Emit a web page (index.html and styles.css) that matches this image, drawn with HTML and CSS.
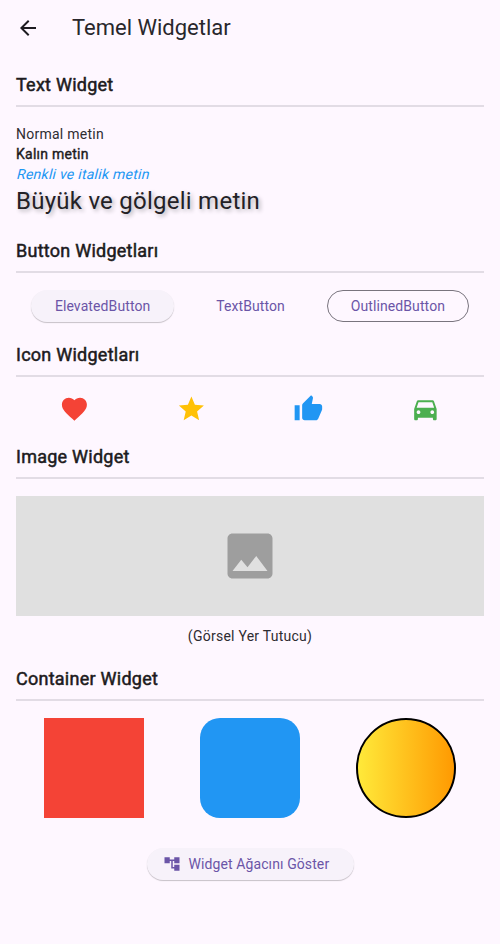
FILE: index.html
```html
<!DOCTYPE html>
<html lang="tr">
<head>
<meta charset="utf-8">
<title>Temel Widgetlar</title>
<link rel="stylesheet" href="styles.css">
</head>
<body>
<header class="app-bar">
  <svg class="back" viewBox="0 0 24 24"><path d="M20 11H7.83l5.59-5.59L12 4l-8 8 8 8 1.41-1.41L7.83 13H20v-2z"/></svg>
  <h1>Temel Widgetlar</h1>
</header>
<main>
  <section class="text-section">
    <h2>Text Widget</h2>
    <p>Normal metin</p>
    <p class="bold">Kalın metin</p>
    <p class="accent">Renkli ve italik metin</p>
    <p class="large">Büyük ve gölgeli metin</p>
  </section>
  <section class="button-section">
    <h2>Button Widgetları</h2>
    <div class="row buttons">
      <button class="elevated">ElevatedButton</button>
      <button class="text">TextButton</button>
      <button class="outlined">OutlinedButton</button>
    </div>
  </section>
  <section class="icon-section">
    <h2>Icon Widgetları</h2>
    <div class="row icons">
      <svg class="red" viewBox="0 0 24 24"><path d="M12 21.35l-1.45-1.32C5.4 15.36 2 12.28 2 8.5 2 5.42 4.42 3 7.5 3c1.74 0 3.41.81 4.5 2.09C13.09 3.81 14.76 3 16.5 3 19.58 3 22 5.42 22 8.5c0 3.78-3.4 6.86-8.55 11.54L12 21.35z"/></svg>
      <svg class="amber" viewBox="0 0 24 24"><path d="M12 17.27L18.18 21l-1.64-7.03L22 9.24l-7.19-.61L12 2 9.19 8.63 2 9.24l5.46 4.73L5.82 21z"/></svg>
      <svg class="blue" viewBox="0 0 24 24"><path d="M1 21h4V9H1v12zm22-11c0-1.1-.9-2-2-2h-6.31l.95-4.57.03-.32c0-.41-.17-.79-.44-1.06L14.17 1 7.59 7.59C7.22 7.95 7 8.45 7 9v10c0 1.1.9 2 2 2h9c.83 0 1.54-.5 1.84-1.22l3.02-7.05c.09-.23.14-.47.14-.73v-2z"/></svg>
      <svg class="green" viewBox="0 0 24 24"><path d="M18.92 6.01C18.72 5.42 18.16 5 17.5 5h-11c-.66 0-1.21.42-1.42 1.01L3 12v8c0 .55.45 1 1 1h1c.55 0 1-.45 1-1v-1h12v1c0 .55.45 1 1 1h1c.55 0 1-.45 1-1v-8l-2.08-5.99zM6.5 16c-.83 0-1.5-.67-1.5-1.5S5.67 13 6.5 13s1.5.67 1.5 1.5S7.33 16 6.5 16zm11 0c-.83 0-1.5-.67-1.5-1.5s.67-1.5 1.5-1.5 1.5.67 1.5 1.5-.67 1.5-1.5 1.5zM5 11l1.5-4.5h11L19 11H5z"/></svg>
    </div>
  </section>
  <section class="image-section">
    <h2>Image Widget</h2>
    <div class="placeholder">
      <svg viewBox="0 0 24 24"><path d="M21 19V5c0-1.1-.9-2-2-2H5c-1.1 0-2 .9-2 2v14c0 1.1.9 2 2 2h14c1.1 0 2-.9 2-2zM8.5 13.5l2.5 3.01L14.5 12l4.5 6H5l3.5-4.5z"/></svg>
    </div>
    <p class="caption">(Görsel Yer Tutucu)</p>
  </section>
  <section>
    <h2>Container Widget</h2>
    <div class="row shapes">
      <div class="shape square"></div>
      <div class="shape rounded"></div>
      <div class="shape circle"></div>
    </div>
  </section>
  <button class="elevated tree">
    <svg viewBox="0 0 24 24"><path d="M22 11V3h-7v3H9V3H2v8h7V8h2v10h4v3h7v-8h-7v3h-2V8h2v3z"/></svg>
    Widget Ağacını Göster
  </button>
</main>
</body>
</html>
```
FILE: styles.css
```css
* { box-sizing: border-box; }
body {
  margin: 0;
  min-height: 944px;
  background: #fef7ff;
  color: #1d1b20;
  font: 400 14px/20px Roboto, sans-serif;
  letter-spacing: 0.25px;
}
h1, h2, p { margin: 0; }
svg { display: block; fill: currentColor; }
.app-bar { display: flex; align-items: center; height: 56px; padding-left: 16px; gap: 32px; }
.back { width: 24px; height: 24px; }
h1 { color: #29272c; font-size: 22px; line-height: 28px; font-weight: 400; letter-spacing: 0; }
p { color: #2e2c31; }
main { padding: 16px; }
h2 {
  height: 35px;
  margin-bottom: 17px;
  border-bottom: 2px solid #e2dce5;
  font-size: 18px;
  line-height: 26px;
  font-weight: 400;
  -webkit-text-stroke: 0.5px currentColor;
}
.text-section { height: 166px; }
.button-section { height: 104px; }
.icon-section { height: 102px; }
.image-section { height: 222px; }
.bold { color: #1d1b20; -webkit-text-stroke: 0.4px currentColor; }
.accent { color: #2196f3; transform: skewX(-14deg); transform-origin: 0 15px; }
.large { color: #232126; font-size: 24px; line-height: 34px; text-shadow: 2px 2px 4px #b0adb2; }
.row { display: flex; justify-content: space-around; align-items: center; }
button {
  height: 32px;
  padding: 0 24px;
  border: 0;
  border-radius: 16px;
  background: transparent;
  color: #6b55a7;
  font: 400 14px/20px Roboto, sans-serif;
  letter-spacing: 0.1px;
}
.elevated { background: #f7f2fa; box-shadow: 0 1px 1px #00000038; }
.text { padding: 0 12px; }
.outlined { padding: 0 23px; border: 1px solid #79747e; }
.icons { margin: 0 0.5px 0 -0.5px; }
.icons svg { width: 30px; height: 30px; transform: translateX(0.4px); }
.red { color: #f44336; }
.amber { color: #ffc107; }
.blue { color: #2196f3; }
.green { color: #4caf50; }
.placeholder { display: grid; place-items: center; height: 120px; background: #e0e0e0; color: #9e9e9e; }
.placeholder svg { width: 60px; height: 60px; }
.caption { margin-top: 10px; text-align: center; }
.shape { width: 100px; height: 100px; }
.square { background: #f44336; }
.rounded { background: #2196f3; border-radius: 20px; }
.circle { border: 2px solid #000; border-radius: 50%; background: linear-gradient(90deg, #ffeb3b, #ff9800) border-box; }
.tree { display: flex; align-items: center; gap: 8px; width: 207px; margin: 30px auto 0; padding: 0 16px; white-space: nowrap; }
.tree svg { flex: none; width: 18px; height: 18px; }
```
